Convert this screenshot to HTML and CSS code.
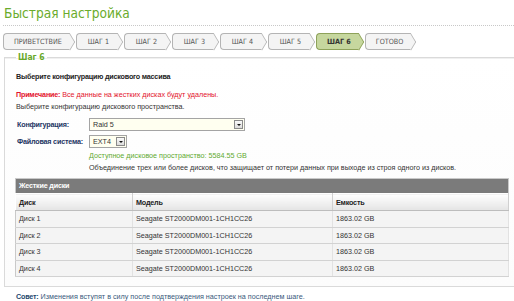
FILE: index.html
```html
<!DOCTYPE html>
<html lang="ru">
<head>
    <meta charset="UTF-8">
    <title>Быстрая настройка</title>
    <link rel="stylesheet" href="styles.css">
</head>

<body>
    <div id="page">
        <h1 class="title">Быстрая настройка</h1>
        <ul class="steps">
            <li>Приветствие</li>
            <li>Шаг 1</li>
            <li>Шаг 2</li>
            <li>Шаг 3</li>
            <li>Шаг 4</li>
            <li>Шаг 5</li>
            <li class="active">Шаг 6</li>
            <li>Готово</li>
        </ul>

        <fieldset class="box">
            <legend>Шаг 6</legend>
            <p class="lead">Выберите конфигурацию дискового массива</p>
            <p class="note"><b>Примечание:</b> Все данные на жестких дисках будут удалены.</p>
            <p class="text">Выберите конфигурацию дискового пространства.</p>

            <div class="form">
                <label>Конфигурация:</label>
                <div class="select wide">Raid 5<span class="arrow"></span></div>
                <label>Файловая система:</label>
                <div class="select small">EXT4<span class="arrow"></span></div>
                <span></span>
                <p class="free">Доступное дисковое пространство: 5584.55 GB</p>
                <span></span>
                <p class="text">Объединение трех или более дисков, что защищает от потери данных при выходе из строя одного из дисков.</p>
            </div>

            <table class="disks">
                <colgroup>
                    <col class="c1">
                    <col class="c2">
                    <col>
                </colgroup>
                <tr class="caption"><th colspan="3">Жесткие диски</th></tr>
                <tr class="head">
                    <td>Диск</td>
                    <td>Модель</td>
                    <td>Емкость</td>
                </tr>
                <tr><td>Диск 1</td><td>Seagate ST2000DM001-1CH1CC26</td><td>1863.02 GB</td></tr>
                <tr><td>Диск 2</td><td>Seagate ST2000DM001-1CH1CC26</td><td>1863.02 GB</td></tr>
                <tr><td>Диск 3</td><td>Seagate ST2000DM001-1CH1CC26</td><td>1863.02 GB</td></tr>
                <tr><td>Диск 4</td><td>Seagate ST2000DM001-1CH1CC26</td><td>1863.02 GB</td></tr>
            </table>
        </fieldset>

        <p class="tip"><b>Совет:</b> Изменения вступят в силу после подтверждения настроек на последнем шаге.</p>
    </div>
</body>

</html>
```

FILE: styles.css
```css
html,
body {
    margin: 0;
    padding: 0;
    background: #fff;
}

body {
    font-family: "Liberation Sans", Arial, sans-serif;
    font-size: 7.2px;
    color: #333;
    overflow: hidden;
}

p {
    margin: 0;
    line-height: 11px;
}

b,
label,
.lead {
    letter-spacing: -0.2px;
}

#page {
    padding-left: 3px;
}

.title {
    margin: 0;
    padding: 3px 0 2px 1px;
    height: 20px;
    line-height: 20px;
    font-family: "DejaVu Sans Condensed", "DejaVu Sans", sans-serif;
    font-size: 13.6px;
    font-weight: normal;
    color: #6aab2b;
    border-bottom: 1px dotted #c8c8c8;
}

/* шаги мастера */
.steps {
    list-style: none;
    margin: 7px 0 0;
    padding: 0;
    display: flex;
}

.steps li {
    position: relative;
    box-sizing: border-box;
    height: 17px;
    line-height: 15px;
    min-width: 42px;
    margin-right: 6px;
    padding: 0 8px 0 10px;
    text-align: center;
    text-transform: uppercase;
    font-family: "DejaVu Sans Condensed", "DejaVu Sans", sans-serif;
    font-size: 7.2px;
    color: #555;
    background: #f4f4f4;
    border: 1px solid #b4b4b4;
    border-right: none;
    border-radius: 4px 0 0 4px;
}

.steps li::after {
    content: '';
    position: absolute;
    top: 50%;
    right: -6px;
    box-sizing: border-box;
    width: 12px;
    height: 12px;
    margin-top: -6px;
    background: #f4f4f4;
    border-top: 1px solid #b4b4b4;
    border-right: 1px solid #b4b4b4;
    transform: scaleX(.6) rotate(45deg);
}

.steps li.active {
    background: #c6d79e;
    border-color: #8ea25a;
    color: #333;
    font-weight: bold;
}

.steps li.active::after {
    background: #c6d79e;
    border-color: #8ea25a;
}

/* основной блок */
.box {
    margin: 2px -20px 0 1px;
    padding: 0 0 9px 11px;
    border: 1px solid #dadada;
    box-shadow: inset 0 1px 0 #f0f0f0;
    background: linear-gradient(#fff, #fcfcfc);
}

.box legend {
    padding: 0 2px;
    margin-left: 0;
    font-family: "DejaVu Sans Condensed", "DejaVu Sans", sans-serif;
    font-size: 8.5px;
    font-weight: bold;
    color: #69a92b;
    line-height: 11px;
}

.lead {
    margin-top: 8px;
    font-weight: bold;
    color: #222;
}

.note {
    margin-top: 7px;
    color: #e3142c;
}

.text {
    color: #333;
}

.note + .text {
    margin-top: 1px;
}

.form {
    display: grid;
    grid-template-columns: 72px 1fr;
    align-items: center;
    row-gap: 4px;
    margin: 6px 0 0 1px;
}

.form label {
    font-weight: bold;
    color: #1d3563;
    white-space: nowrap;
}

.form .free {
    margin-top: -2px;
}

.form .text {
    margin-top: -3px;
}

.free {
    color: #62aa30;
}

.select {
    position: relative;
    box-sizing: border-box;
    height: 13px;
    line-height: 11px;
    padding-left: 3px;
    border: 1px solid #a4a4a4;
    background: #fffff0;
    color: #333;
}

.select.wide {
    width: 156px;
}

.select.small {
    width: 38px;
}

.select .arrow {
    position: absolute;
    right: 1px;
    top: 1px;
    box-sizing: border-box;
    width: 9px;
    height: 9px;
    border: 1px solid #8a8a8a;
    background: linear-gradient(#fafafa, #dcdcdc);
}

.select .arrow::after {
    content: '';
    position: absolute;
    left: 1.5px;
    top: 2.5px;
    border-left: 2.5px solid transparent;
    border-right: 2.5px solid transparent;
    border-top: 2.5px solid #111;
}

/* таблица дисков */
.disks {
    width: 494px;
    margin: 5px 0 0 -1px;
    border-collapse: collapse;
    border: 1px solid #c9c9c9;
    table-layout: fixed;
}

.disks .c1 {
    width: 117px;
}

.disks .c2 {
    width: 200px;
}

.disks th,
.disks td {
    padding: 0 0 0 3px;
    text-align: left;
    white-space: nowrap;
}

.disks .caption th {
    height: 14px;
    line-height: 14px;
    background: #7b7b7b;
    color: #fff;
    font-weight: bold;
    letter-spacing: -0.2px;
}

.disks td {
    height: 15.5px;
    color: #333;
    background: #f4f4f4;
    border-top: 1px solid #fff;
    border-bottom: 1px solid #d2d2d2;
    border-right: 1px solid #e2e2e2;
}

.disks .head td {
    height: 16px;
    font-weight: bold;
    letter-spacing: -0.2px;
    color: #222;
    background: linear-gradient(#fff, #e4e4e4);
    border-left: 1px solid #fff;
    border-right: 1px solid #d0d0d0;
    border-bottom: 1px solid #bdbdbd;
}

.tip {
    margin: 4px 0 0 13px;
    color: #3a5a7c;
}

.tip b {
    color: #24476e;
}
```
